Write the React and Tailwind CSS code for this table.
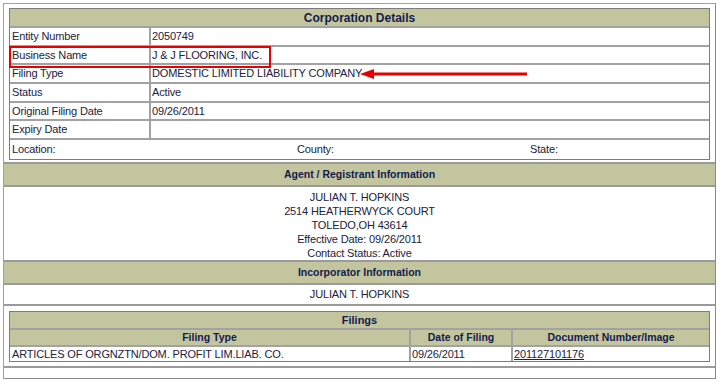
import React from "react";

const LABELS = [
  ["Entity Number", "2050749"],
  ["Business Name", "J & J FLOORING, INC."],
  ["Filing Type", "DOMESTIC LIMITED LIABILITY COMPANY"],
  ["Status", "Active"],
  ["Original Filing Date", "09/26/2011"],
  ["Expiry Date", ""],
];

const AGENT = [
  "JULIAN T. HOPKINS",
  "2514 HEATHERWYCK COURT",
  "TOLEDO,OH 43614",
  "Effective Date: 09/26/2011",
  "Contact Status: Active",
];

function Header({ children, className = "" }) {
  return (
    <div className={`bg-[#c3c59e] text-center font-bold text-[#141b4d] ${className}`}>
      {children}
    </div>
  );
}

export default function App() {
  return (
    <div className="min-h-screen bg-white pl-[3px] pt-[3px] font-['Liberation_Sans',Arial,sans-serif] text-[11px] tracking-[-0.15px] text-[#20223e]">
      <div className="relative w-[713px] border border-[#a0a0a0] border-r-[#8a8a8a] border-b-[#8a8a8a] bg-[#9a9a9a] flex flex-col gap-[2px]">
        {/* Corporation details */}
        <div className="bg-white px-[5px] pt-[4px] pb-[2px]">
          <div className="border border-[#7c7c7c] bg-[#a2a2a2] flex flex-col gap-[2px]">
            <Header className="h-[17px] leading-[18px] text-[12px] tracking-normal">Corporation Details</Header>
            {LABELS.map(([k, v]) => (
              <div key={k} className="flex gap-[2px] h-[16.67px] leading-[17px]">
                <div className="w-[139px] bg-white pl-[2px]">{k}</div>
                <div className="flex-1 bg-white pl-[1px]">{v}</div>
              </div>
            ))}
            <div className="flex bg-white h-[19px] leading-[19px] pl-[2px]">
              <div className="w-[285px]">Location:</div>
              <div className="w-[233px]">County:</div>
              <div>State:</div>
            </div>
          </div>
        </div>

        {/* Agent */}
        <Header className="h-[21px] leading-[21px] text-[10.5px] tracking-normal">Agent / Registrant Information</Header>
        <div className="bg-white h-[73px] pt-[3px] text-center leading-[14px]">
          {AGENT.map((l) => (
            <div key={l}>{l}</div>
          ))}
        </div>

        {/* Incorporator */}
        <Header className="h-[21px] leading-[21px] text-[10.5px] tracking-normal">Incorporator Information</Header>
        <div className="bg-white h-[19px] leading-[19px] text-center">JULIAN T. HOPKINS</div>

        {/* Filings */}
        <div className="bg-white h-[60px] px-[5px] pt-[5px]">
          <div className="border border-[#7c7c7c] bg-[#a2a2a2] flex flex-col gap-[2px]">
            <Header className="h-[16px] leading-[16px] text-[11px] tracking-normal">Filings</Header>
            <div className="flex gap-[2px] h-[15px] leading-[15px] text-[10.5px] tracking-normal">
              <Header className="w-[399px]">Filing Type</Header>
              <Header className="w-[100px]">Date of Filing</Header>
              <Header className="flex-1">Document Number/Image</Header>
            </div>
            <div className="flex gap-[2px] h-[14px] leading-[14px]">
              <div className="w-[399px] bg-white pl-[2px]">ARTICLES OF ORGNZTN/DOM. PROFIT LIM.LIAB. CO.</div>
              <div className="w-[100px] bg-white pl-[1px]">09/26/2011</div>
              <div className="flex-1 bg-white pl-[1px]">
                <span className="underline">201127101176</span>
              </div>
            </div>
          </div>
        </div>

        <div className="bg-white h-[10px]" />

        {/* annotations */}
        <div className="absolute left-[5px] top-[42px] w-[262px] h-[22px] border-2 border-[#e60000]" />
        <svg className="absolute left-[354px] top-[63px]" width="172" height="14" viewBox="0 0 172 14">
          <line x1="12" y1="7" x2="169" y2="7" stroke="#e60000" strokeWidth="3" />
          <polygon points="2,7 16,2 16,12" fill="#e60000" />
        </svg>
      </div>
    </div>
  );
}
